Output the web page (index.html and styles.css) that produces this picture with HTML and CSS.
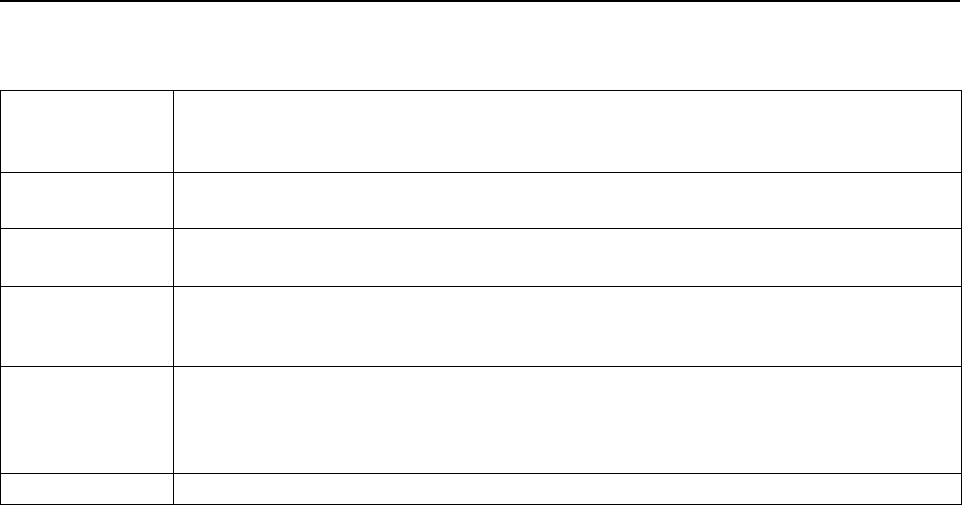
FILE: index.html
```html
<!DOCTYPE html>
<html lang="en">
<head>
  <meta charset="UTF-8">
  <meta name="viewport" content="width=device-width, initial-scale=1">
  <title>Table</title>
  <link rel="stylesheet" href="styles.css">
</head>
<body>
  <div class="top-rule"></div>

  <table class="grid">
    <tr class="row-a"><td class="label"></td><td></td></tr>
    <tr class="row-b"><td class="label"></td><td></td></tr>
    <tr class="row-c"><td class="label"></td><td></td></tr>
    <tr class="row-d"><td class="label"></td><td></td></tr>
    <tr class="row-e"><td class="label"></td><td></td></tr>
    <tr class="row-f"><td class="label"></td><td></td></tr>
  </table>
</body>
</html>
```

FILE: styles.css
```css
* {
  box-sizing: border-box;
  margin: 0;
  padding: 0;
}

body {
  background: #fff;
  font-family: "Liberation Sans", Arial, sans-serif;
}

.top-rule {
  width: 960px;
  height: 2px;
  background: #000;
}

.grid {
  margin-top: 88px;
  width: 962px;
  border-collapse: collapse;
}

.grid td {
  border: 1px solid #000;
  padding: 0;
}

.grid td.label {
  width: 173px;
}

.row-a td { height: 82px; }
.row-b td { height: 56px; }
.row-c td { height: 58px; }
.row-d td { height: 80px; }
.row-e td { height: 107px; }
.row-f td { height: 31px; }
```
